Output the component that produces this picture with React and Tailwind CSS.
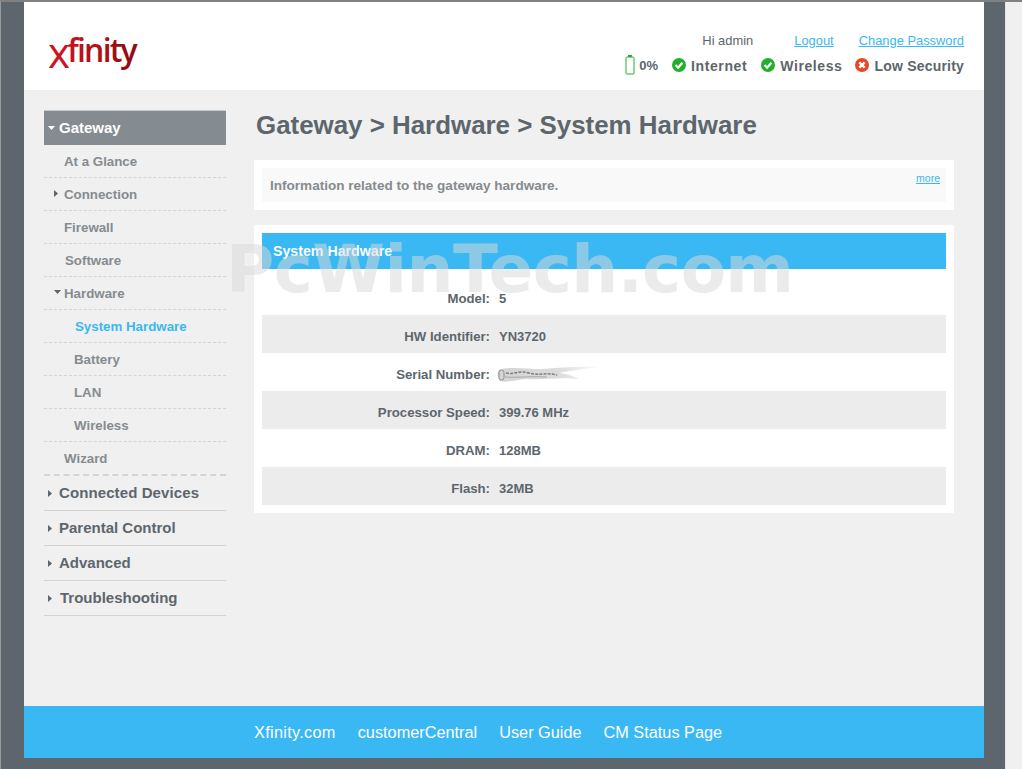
import React from "react";

const subItems = [
  { label: "At a Glance", pad: "pl-5" },
  { label: "Connection", pad: "pl-5", arrow: "right" },
  { label: "Firewall", pad: "pl-5" },
  { label: "Software", pad: "pl-[21px]" },
  { label: "Hardware", pad: "pl-5", arrow: "down" },
  { label: "System Hardware", pad: "pl-[31px]", active: true },
  { label: "Battery", pad: "pl-[30px]" },
  { label: "LAN", pad: "pl-[30px]" },
  { label: "Wireless", pad: "pl-[30px]" },
  { label: "Wizard", pad: "pl-5", last: true },
];

const topItems = [
  { label: "Connected Devices", gap: "ml-[7px] tracking-[0.1px]" },
  { label: "Parental Control", gap: "ml-[7px]" },
  { label: "Advanced", gap: "ml-[7px]" },
  { label: "Troubleshooting", gap: "ml-[8px]" },
];

const rows = [
  ["Model:", "5"],
  ["HW Identifier:", "YN3720"],
  ["Serial Number:", null],
  ["Processor Speed:", "399.76 MHz"],
  ["DRAM:", "128MB"],
  ["Flash:", "32MB"],
];

const footerLinks = [
  { label: "Xfinity.com", cls: "tracking-[0.3px]" },
  { label: "customerCentral", cls: "" },
  { label: "User Guide", cls: "" },
  { label: "CM Status Page", cls: "" },
];

function CheckIcon() {
  return (
    <svg width="14" height="14" viewBox="0 0 15 15">
      <circle cx="7.5" cy="7.5" r="7.5" fill="#22b02a" />
      <path d="M3.8 7.6 L6.5 10.4 L11.2 5" fill="none" stroke="#fff" strokeWidth="2.4" />
    </svg>
  );
}

function CrossIcon() {
  return (
    <svg width="14" height="14" viewBox="0 0 15 15">
      <circle cx="7.5" cy="7.5" r="7.5" fill="#ee4423" />
      <path d="M4.6 4.6 L10.4 10.4 M10.4 4.6 L4.6 10.4" fill="none" stroke="#fff" strokeWidth="2.6" />
    </svg>
  );
}

function BatteryIcon() {
  return (
    <svg width="10" height="20" viewBox="0 0 10 20">
      <rect x="3" y="0" width="4" height="2" fill="#22b02a" />
      <rect x="1" y="2" width="8" height="17" rx="1" fill="#fff" stroke="#22b02a" />
    </svg>
  );
}

function Arrow({ dir, color }) {
  if (dir === "down") {
    return (
      <svg width="7" height="4" viewBox="0 0 7 4">
        <path d="M0 0 H7 L3.5 4 Z" fill={color} />
      </svg>
    );
  }
  return (
    <svg width="4" height="7" viewBox="0 0 4 7">
      <path d="M0 0 V7 L4 3.5 Z" fill={color} />
    </svg>
  );
}

// mancha que esconde o numero de serie
function SerialSmudge() {
  return (
    <svg width="104" height="18" viewBox="0 0 104 18">
      <defs>
        <linearGradient id="smudge" x1="0" x2="1" y1="0" y2="0">
          <stop offset="0" stopColor="#d4d4d4" />
          <stop offset="0.6" stopColor="#dcdcdc" />
          <stop offset="1" stopColor="#ffffff" />
        </linearGradient>
      </defs>
      <path d="M2 5 C12 1 30 4 44 4 C60 3 80 1 104 2 C84 4 72 6 62 8 C72 9 76 11 82 14 C60 12 48 15 30 14 C18 15 8 18 3 16 C0 12 0 8 2 5 Z" fill="url(#smudge)" />
      <path d="M9 8 C16 10 22 5 32 8 C42 11 50 7 60 10" fill="none" stroke="#7f7f7f" strokeWidth="1.5" strokeDasharray="3 1.2" />
      <path d="M8 12 C18 13 30 11 50 12" fill="none" stroke="#a8a8a8" strokeWidth="1" />
      <rect x="2" y="5" width="5" height="10" rx="2.5" fill="none" stroke="#8f8f8f" />
    </svg>
  );
}

export default function App() {
  return (
    <div className="relative flex w-[1022px] h-[769px] overflow-hidden bg-[#5d666c] font-['Liberation_Sans',Arial,sans-serif] border-t-2 border-t-[#808080] border-l border-l-[#9a9a9a]">

      {/* PAGINA */}
      <div className="flex flex-col w-[960px] h-[756px] ml-[23px] shrink-0">

        {/* TOPO */}
        <header className="flex justify-between h-[88px] bg-white shrink-0">
          <div className="pl-[24px] pt-[24px]">
            <span className="block h-[46px] text-[32px] leading-[40px] font-semibold font-['Open_Sans',sans-serif] tracking-[-1.8px] whitespace-nowrap">
              <span className="relative top-[6px] mr-[-1px] text-[42px] leading-[40px] font-normal text-[#cc1520]">x</span>
              <span className="text-[#c4131d]">f</span>
              <span className="text-[#bb121b]">i</span>
              <span className="text-[#b21119]">n</span>
              <span className="text-[#a80f17]">i</span>
              <span className="text-[#9e0e15]">t</span>
              <span className="text-[#930d13]">y</span>
            </span>
          </div>

          <div className="flex flex-col items-end pr-5 pt-[31px]">
            <div className="flex text-[12.9px] leading-[16px] text-[#5d666c]">
              <span>Hi admin</span>
              <a className="ml-[41px] text-[#39b8f3] underline">Logout</a>
              <a className="ml-[25px] text-[#39b8f3] underline">Change Password</a>
            </div>
            <div className="flex items-center mt-[6px] h-5 text-[14px] font-bold tracking-[0.6px] text-[#5d666c]">
              <BatteryIcon />
              <span className="ml-[4px] mr-[14px] pt-[2px] text-[13px] tracking-normal">0%</span>
              <CheckIcon />
              <span className="ml-[5px] mr-[14px] pt-[2px]">Internet</span>
              <CheckIcon />
              <span className="ml-[5px] mr-[13px] pt-[2px]">Wireless</span>
              <CrossIcon />
              <span className="ml-[5px] pt-[2px] tracking-[0.2px]">Low Security</span>
            </div>
          </div>
        </header>

        {/* CONTEUDO */}
        <div className="flex flex-1 bg-[#f0f0f0] pl-5">

          {/* MENU */}
          <nav className="w-[182px] pt-5 shrink-0">
            <div className="flex items-center h-[35px] pl-1 bg-[#848c91] border-t border-t-[#c4c8ca] text-[15px] font-bold text-white">
              <Arrow dir="down" color="#fff" />
              <span className="ml-1">Gateway</span>
            </div>

            {subItems.map((item) => (
              <div
                key={item.label}
                className={`relative flex items-center pt-[2px] ${item.last ? "h-[34px] border-b-2" : "h-[33px] border-b"} ${item.pad} border-dashed border-b-[#d4d4d4] text-[13.3px] font-bold ${item.active ? "text-[#39b8f3]" : "text-[#858b8f]"}`}
              >
                {item.arrow === "right" && (
                  <span className="absolute left-[10px] top-[12px] flex">
                    <Arrow dir="right" color="#5d666c" />
                  </span>
                )}
                {item.arrow === "down" && (
                  <span className="absolute left-[10px] top-[13px] flex">
                    <Arrow dir="down" color="#5d666c" />
                  </span>
                )}
                {item.label}
              </div>
            ))}

            {topItems.map((item) => (
              <div
                key={item.label}
                className="flex items-center h-[35px] pl-1 border-b border-b-[#d4d4d4] text-[15px] font-bold text-[#5d666c]"
              >
                <Arrow dir="right" color="#5d666c" />
                <span className={item.gap}>{item.label}</span>
              </div>
            ))}
          </nav>

          {/* PAINEL */}
          <main className="w-[700px] ml-7 shrink-0">
            <h1 className="mt-[19px] ml-[2px] text-[25.9px] leading-[32px] font-bold text-[#5d666c]">
              Gateway &gt; Hardware &gt; System Hardware
            </h1>

            <section className="mt-[19px] p-2 bg-white">
              <div className="flex justify-between h-[34px] pl-2 pr-[6px] bg-[#f9f9f9]">
                <p className="pt-[10px] text-[13.55px] leading-[15px] font-bold text-[#858b8f]">
                  Information related to the gateway hardware.
                </p>
                <a className="pt-[4px] text-[10.5px] leading-[12px] h-fit text-[#39b8f3] underline">more</a>
              </div>
            </section>

            <section className="mt-[15px] p-2 bg-white">
              <div className="flex items-center h-[36px] pl-[11px] pt-[2px] bg-[#39b8f3] text-[14.2px] font-bold text-white">
                System Hardware
              </div>
              <div className="mt-2">
                {rows.map(([label, value], i) => (
                  <div
                    key={label}
                    className={`flex items-center h-[38px] pt-[6px] text-[13px] font-bold text-[#5d666c] ${i % 2 === 1 ? "bg-[#ececec]" : ""}`}
                  >
                    <span className="w-[228px] text-right text-[13.2px]">{label}</span>
                    <span className="ml-[9px] flex">
                      {value ?? <span className="-ml-[2px] -mt-[2px] flex"><SerialSmudge /></span>}
                    </span>
                  </div>
                ))}
              </div>
            </section>
          </main>
        </div>

        {/* RODAPE */}
        <footer className="flex items-center h-[52px] pt-px pl-[230px] gap-[22px] bg-[#39b8f3] text-[16.3px] text-white shrink-0">
          {footerLinks.map((link) => (
            <a key={link.label} className={link.cls}>{link.label}</a>
          ))}
        </footer>
      </div>

      {/* BARRA DE ROLAGEM */}
      <div className="ml-[21px] w-[17px] h-[769px] bg-[#f0f0f0] border-l border-l-[#e4e4e4]" />

      {/* MARCA D'AGUA */}
      <div className="absolute left-[225px] top-[230px] text-[66px] leading-[76px] font-bold tracking-[-0.6px] font-['DejaVu_Sans',sans-serif] text-[#d9d9d9]/[0.52] whitespace-nowrap pointer-events-none">
        PcWinTech.com
      </div>
    </div>
  );
}
